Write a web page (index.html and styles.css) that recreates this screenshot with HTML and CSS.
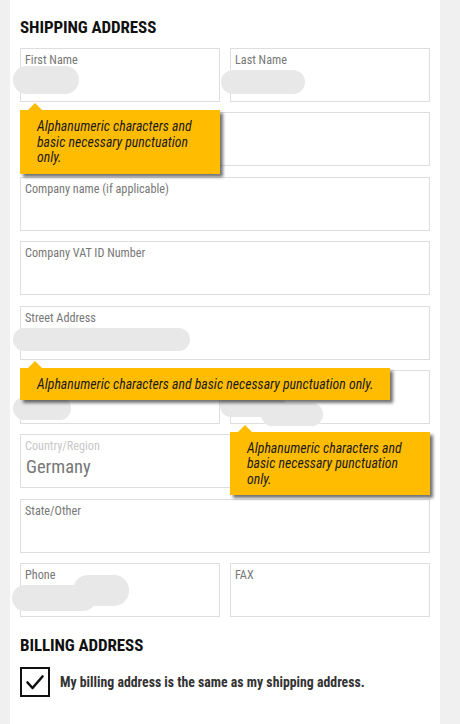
FILE: index.html
```html
<!DOCTYPE html>
<html lang="en">
<head>
<meta charset="utf-8">
<title>Shipping Address</title>
<link rel="stylesheet" href="styles.css">
</head>
<body>
<main class="panel">
  <h2 class="heading">SHIPPING ADDRESS</h2>
  <div class="fields">
    <div class="field">
      <span class="label">First Name</span>
      <span class="blur b-first"></span>
      <div class="tip tip-narrow">Alphanumeric characters and basic necessary punctuation only.</div>
    </div>
    <div class="field">
      <span class="label">Last Name</span>
      <span class="blur b-last"></span>
    </div>
    <div class="field wide"></div>
    <div class="field wide"><span class="label">Company name (if applicable)</span></div>
    <div class="field wide"><span class="label">Company VAT ID Number</span></div>
    <div class="field wide">
      <span class="label">Street Address</span>
      <span class="blur b-street"></span>
      <div class="tip tip-long">Alphanumeric characters and basic necessary punctuation only.</div>
    </div>
    <div class="field">
      <span class="blur b-city"></span>
    </div>
    <div class="field">
      <span class="blur b-zip1"></span>
      <span class="blur b-zip2"></span>
      <div class="tip tip-narrow">Alphanumeric characters and basic necessary punctuation only.</div>
    </div>
    <div class="field wide">
      <span class="label light">Country/Region</span>
      <span class="value">Germany</span>
    </div>
    <div class="field wide"><span class="label">State/Other</span></div>
    <div class="field">
      <span class="label">Phone</span>
      <span class="blur b-phone1"></span>
      <span class="blur b-phone2"></span>
    </div>
    <div class="field"><span class="label">FAX</span></div>
  </div>
  <h2 class="heading billing">BILLING ADDRESS</h2>
  <label class="check">
    <span class="box">
      <svg width="26" height="26" viewBox="0 0 26 26"><polyline points="5.5,13.5 10.5,19 20.5,7.5" fill="none" stroke="#111" stroke-width="2.6" stroke-linecap="round" stroke-linejoin="round"/></svg>
    </span>
    <span class="check-text">My billing address is the same as my shipping address.</span>
  </label>
</main>
</body>
</html>
```
FILE: styles.css
```css
html, body {
  margin: 0;
  padding: 0;
  background: #f0f0f0;
  height: 100%;
}
body {
  font-family: "Roboto Condensed", "Open Sans", sans-serif;
}
.panel {
  margin-left: 10px;
  min-height: 724px;
  box-sizing: border-box;
  width: 430px;
  background: #fff;
  padding: 17px 10px 0 10px;
}
.heading {
  margin: 0;
  font-size: 17px;
  line-height: 20px;
  font-weight: bold;
  color: #111;
  letter-spacing: -0.1px;
}
.fields {
  margin-top: 11px;
  display: grid;
  grid-template-columns: 200px 200px;
  column-gap: 10px;
  row-gap: 10.4px;
}
.field {
  position: relative;
  height: 54px;
  box-sizing: border-box;
  border: 1px solid #dedede;
  padding: 4px 4px 0 4px;
  display: flex;
  flex-direction: column;
}
.field.wide {
  grid-column: 1 / span 2;
}
.label {
  font-size: 12.2px;
  line-height: 15px;
  color: #777;
}
.label.light {
  color: #c8c8c8;
}
.value {
  margin-top: 1px;
  font-size: 18.5px;
  line-height: 24px;
  color: #777;
  padding-left: 1px;
}
.blur {
  position: absolute;
  background: #e8e8e8;
  border-radius: 12px;
  filter: blur(0.6px);
}
.b-first { left: -8px; top: 17px; width: 66px; height: 28px; border-radius: 14px; }
.b-last { left: -10px; top: 21px; width: 84px; height: 24px; }
.b-street { left: -8px; top: 21px; width: 177px; height: 23px; }
.b-city { left: -8px; top: 26px; width: 58px; height: 23px; }
.b-zip1 { left: -11px; top: 24px; width: 66px; height: 22px; }
.b-zip2 { left: 30px; top: 32px; width: 62px; height: 23px; }
.b-phone1 { left: -9px; top: 21px; width: 84px; height: 26px; border-radius: 13px; }
.b-phone2 { left: 52px; top: 11px; width: 56px; height: 31px; border-radius: 15px; }
.tip {
  position: absolute;
  left: -1px;
  top: 61px;
  z-index: 5;
  box-sizing: border-box;
  background: #ffbc00;
  color: #1a1a1a;
  font-style: italic;
  font-size: 13.8px;
  line-height: 15.5px;
  padding: 9px 10px 8px 17px;
  box-shadow: 3px 3px 3px rgba(0, 0, 0, 0.55);
}
.tip::before {
  content: "";
  position: absolute;
  left: 8px;
  top: -7px;
  border-left: 7px solid transparent;
  border-right: 7px solid transparent;
  border-bottom: 7px solid #ffbc00;
}
.tip-narrow {
  width: 200px;
}
.tip-long {
  width: 370px;
  white-space: nowrap;
}
.billing {
  margin-top: 18px;
}
.check {
  margin-top: 12px;
  display: flex;
  align-items: center;
  gap: 10px;
}
.box {
  width: 30px;
  height: 30px;
  box-sizing: border-box;
  border: 2px solid #111;
  display: flex;
  align-items: center;
  justify-content: center;
}
.check-text {
  font-size: 13.8px;
  font-weight: bold;
  color: #333;
}
```
